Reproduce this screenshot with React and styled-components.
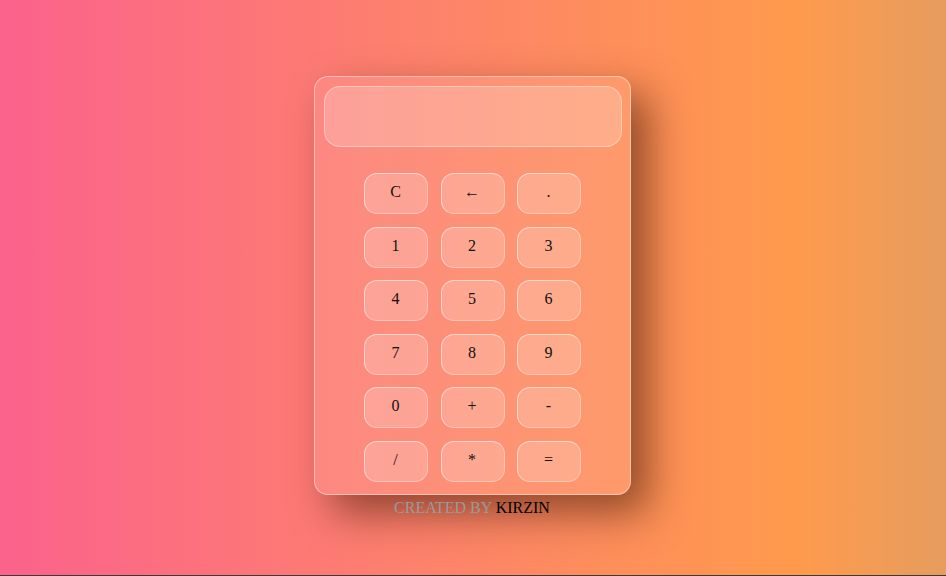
import React from "react";
import styled, { createGlobalStyle } from "styled-components";

const Global = createGlobalStyle`
  html { background: #3a3a3a; }
  body { margin: 0; font-family: "Liberation Serif", "Times New Roman", serif; font-size: 16px; }
`;

const Page = styled.div`
  height: 575px;
  background: linear-gradient(90deg, #fb628c 0%, #fd7f6f 40%, #ff9a4c 84%, #e69d5f 100%);
  display: flex;
  flex-direction: column;
  align-items: center;
  padding: 76px 1px 0 0;
  box-sizing: border-box;
  overflow: hidden;
`;

const Card = styled.div`
  width: 317px;
  height: 419px;
  box-sizing: border-box;
  border-radius: 14px;
  border: 1px solid rgba(255, 255, 255, 0.45);
  background: rgba(255, 255, 255, 0.1);
  box-shadow: 18px 18px 40px rgba(60, 20, 0, 0.55);
  padding: 9px 8px 0 9px;
  display: flex;
  flex-direction: column;
  align-items: center;
`;

const Display = styled.div`
  width: 298px;
  height: 61px;
  box-sizing: border-box;
  border-radius: 16px;
  border: 1px solid rgba(255, 255, 255, 0.4);
  background: rgba(255, 255, 255, 0.2);
`;

const Keys = styled.div`
  margin: 26px 1px 0 0;
  display: grid;
  grid-template-columns: repeat(3, 64px);
  grid-auto-rows: 41px;
  column-gap: 12.5px;
  row-gap: 12.6px;
`;

const Key = styled.button`
  box-sizing: border-box;
  width: 64px;
  height: 41px;
  border-radius: 13px;
  border: 1px solid rgba(255, 255, 255, 0.35);
  border-top-color: rgba(255, 255, 255, 0.55);
  border-left-color: rgba(255, 255, 255, 0.55);
  background: rgba(255, 255, 255, 0.2);
  font-family: "Liberation Serif", "Times New Roman", serif;
  font-size: 16px;
  color: #111;
  padding: 0 1px 3px 0;
  cursor: pointer;
`;

const Footer = styled.div`
  margin: 3px 1px 0 0;
  font-size: 16px;
  line-height: 20px;
  color: #9a9a9a;
`;

const Name = styled.span`
  color: #000;
`;

const keys = ["C", "←", ".", "1", "2", "3", "4", "5", "6", "7", "8", "9", "0", "+", "-", "/", "*", "="];

export default function App() {
  return (
    <>
      <Global />
      <Page>
        <Card>
          <Display />
          <Keys>
            {keys.map((k) => (
              <Key key={k}>{k}</Key>
            ))}
          </Keys>
        </Card>
        <Footer>
          CREATED BY <Name>KIRZIN</Name>
        </Footer>
      </Page>
    </>
  );
}
